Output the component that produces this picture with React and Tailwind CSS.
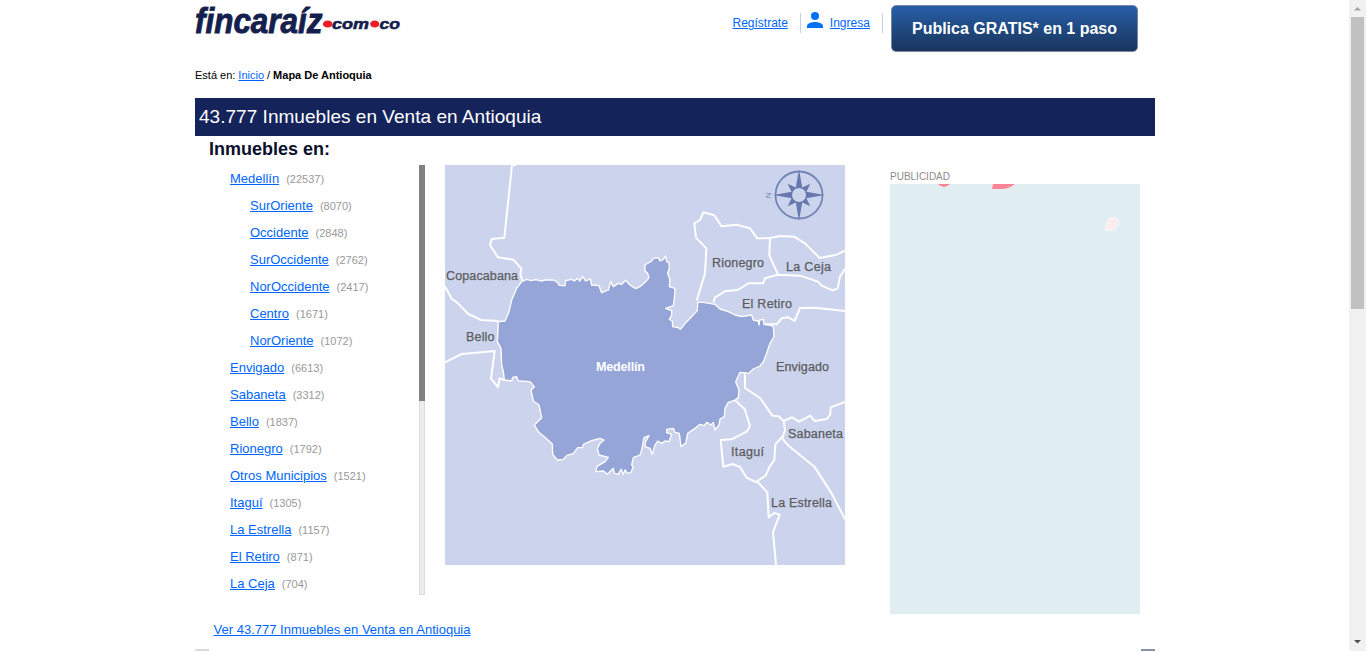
import React from 'react';

const places = [
  ['Medellín', 22537],
  ['SurOriente', 8070, true],
  ['Occidente', 2848, true],
  ['SurOccidente', 2762, true],
  ['NorOccidente', 2417, true],
  ['Centro', 1671, true],
  ['NorOriente', 1072, true],
  ['Envigado', 6613],
  ['Sabaneta', 3312],
  ['Bello', 1837],
  ['Rionegro', 1792],
  ['Otros Municipios', 1521],
  ['Itaguí', 1305],
  ['La Estrella', 1157],
  ['El Retiro', 871],
  ['La Ceja', 704],
];

const medellin =
  '230,350 245,343 258,347 272,344 290,348 300,345 325,345 338,352 343,361 360,362 362,347 380,343 388,348 398,340 404,348 413,335 422,348 436,342 440,360 462,362 470,383 490,375 497,350 505,365 520,355 530,358 542,346 555,360 572,371 585,365 600,352 ' +
  '605,347 612,338 608,325 600,318 600,300 620,288 625,280 640,278 645,288 655,283 662,273 665,290 672,293 673,310 668,325 675,345 673,365 690,370 688,400 685,422 662,430 680,437 680,450 673,463 682,468 683,485 700,488 706,493 725,470 740,455 757,437 758,412 775,412 810,418 825,432 850,440 870,450 890,455 920,450 925,465 940,468 942,480 944,465 955,463 957,478 972,480 985,485 987,515 975,535 965,565 955,590 945,603 ' +
  '925,612 912,625 885,622 872,650 882,675 880,698 868,706 850,712 840,730 838,755 825,762 822,780 810,795 805,772 798,780 785,772 778,782 765,778 750,790 728,805 722,835 708,845 703,805 690,802 685,790 665,793 665,803 680,808 672,830 660,828 650,835 638,828 630,840 622,868 615,850 600,845 602,830 612,812 597,818 590,855 ' +
  '585,870 565,878 560,900 565,905 558,922 548,925 540,915 535,928 528,913 520,928 508,925 505,910 487,928 475,918 453,920 455,905 480,890 490,877 462,870 457,850 465,835 477,825 465,820 440,827 415,838 413,848 398,848 385,865 365,872 355,883 337,885 323,868 322,837 303,820 280,800 268,780 290,758 282,720 265,708 258,675 268,665 255,650 220,648 215,635 203,637 200,648 178,645 175,620 170,600 168,550 157,530 160,470 180,468 192,440 200,405 215,370';

const borders = [
  '213,0 201,0 178,218 140,222 135,240 159,277 205,284 229,311 226,328 233,350',
  '0,364 20,401 40,416 70,447 109,465 160,468',
  '0,592 50,567 149,558 138,640 159,667 164,640 178,645',
  '755,407 780,325 784,250 753,218 748,175 765,165 775,142 808,151 830,184 875,179 915,190 937,220 975,219 1005,213 1048,215 1080,235 1124,279 1175,269 1200,257',
  '975,219 973,272 999,328',
  '805,412 810,397 840,379 878,375 910,355 954,355 960,340 998,329 1065,332 1119,350 1130,362 1164,376 1178,370 1185,335 1200,312',
  '960,478 995,478 1010,460 1030,457 1049,468 1065,429 1110,428 1200,438',
  '900,622 900,669 945,699 982,752 1001,754 1016,768 1041,757 1062,770 1096,752 1109,768 1146,762 1156,747 1157,727 1200,711',
  '1016,768 1020,795 1012,820 1028,840 1108,905 1160,985 1200,1063',
  '1012,815 991,838 988,885 974,905 962,932 932,951 905,938 885,906 862,897 835,905 827,825 860,823 905,800 915,783 899,732 870,706',
  '936,949 967,982 971,1057 988,1044 1004,1049 984,1102 993,1200',
];

const labels = [
  ['Copacabana', 1, 115, 72],
  ['Bello', 21, 176.3, 28.5],
  ['Rionegro', 267, 102, 52],
  ['La Ceja', 341, 106, 45],
  ['El Retiro', 297, 143, 50],
  ['Envigado', 331, 206, 53],
  ['Sabaneta', 343, 273, 55],
  ['Itaguí', 286, 291, 33],
  ['La Estrella', 326, 342, 61],
];

function Link({ children, className = '' }) {
  return <a className={`text-[#0066ff] underline ${className}`}>{children}</a>;
}

function Logo() {
  return (
    <svg className="block h-[40px] w-[210px] overflow-visible" viewBox="0 0 210 40" fill="#151f4d" stroke="#151f4d" fontFamily="'Liberation Sans', Arial, sans-serif" fontStyle="italic" fontWeight="700">
      <text x="0" y="33" fontSize="34.5" strokeWidth=".9" textLength="127.500" lengthAdjust="spacingAndGlyphs">fincaraíz</text>
      <text x="137" y="29" fontSize="15" strokeWidth=".6" textLength="37" lengthAdjust="spacingAndGlyphs">com</text>
      <text x="184.500" y="29" fontSize="15" strokeWidth=".6" textLength="20.500" lengthAdjust="spacingAndGlyphs">co</text>
      <g fill="#ee1c25" stroke="none">
        <ellipse cx="132.700" cy="24" rx="4.800" ry="3.600" />
        <ellipse cx="179.700" cy="24" rx="4.600" ry="3.600" />
      </g>
    </svg>
  );
}

function Compass() {
  return (
    <g transform="translate(354 30)" fill="#6678ad">
      <circle r="23.5" fill="none" stroke="#7384b6" strokeWidth="1.8" />
      {[0, 90, 180, 270].map((a) => (
        <path key={a} transform={`rotate(${a})`} d="M0-25.5 3.5-6H-3.5Z" />
      ))}
      {[45, 135, 225, 315].map((a) => (
        <path key={a} transform={`rotate(${a})`} d="M0-16 3.500-6H-3.500Z" />
      ))}
      <circle r="7" fill="#ccd3ec" />
      <text transform="translate(-28.5 3.2) rotate(-90)" fontSize="8">N</text>
    </g>
  );
}

function Map() {
  return (
    <svg className="block h-[400px] w-[400px] shrink-0 bg-[#ccd3ec]" viewBox="0 0 400 400" fontFamily="'Liberation Sans', Arial, sans-serif">
      <g transform="scale(.333333)" stroke="#fff" strokeLinejoin="round">
        <polygon points={medellin} fill="#96a5d7" strokeWidth="4" />
        {borders.map((p) => (
          <polyline key={p} points={p} fill="none" strokeWidth="6" />
        ))}
      </g>
      <g fill="#5b5c60" stroke="#5b5c60" strokeWidth=".25" fontSize="12.5">
        {labels.map(([name, x, y, w]) => (
          <text key={name} x={x} y={y} textLength={w}>{name}</text>
        ))}
      </g>
      <text x="151" y="206" fontSize="12.5" fontWeight="700" fill="#fff" textLength="49">Medellín</text>
      <Compass />
    </svg>
  );
}

export default function App() {
  return (
    <div className="flex h-[651px] overflow-hidden bg-white font-['Liberation_Sans',Arial,sans-serif] text-[#0a0f2c]">
      <div className="flex grow justify-center pl-px">
        <div className="flex w-[960px] flex-col">
          <header className="flex h-[64px] items-start">
            <Logo />
            <div className="ml-[327.500px] flex w-[158.500px] items-start text-[12px] leading-[20px]">
              <Link className="mt-[13px]">Regístrate</Link>
              <div className="mt-[13px] ml-3 h-5 w-px bg-[#c8d2e6]" />
              <svg className="mt-[12px] ml-1.5 h-4 w-4" viewBox="0 0 16 16" fill="#0070f5">
                <circle cx="8" cy="4" r="4" />
                <path d="M0 16v-2C0 11.300 5 10 8 10s8 1.300 8 4v2Z" />
              </svg>
              <Link className="mt-[13px] ml-[7px]">Ingresa</Link>
              <div className="mt-[13px] ml-3 h-5 w-px bg-[#c8d2e6]" />
            </div>
            <button className="-ml-px mt-[5px] h-[47px] w-[247px] translate-x-px rounded-[5px] border border-[#7a86a5] bg-linear-to-b from-[#265fa8] to-[#19355c] text-[16px] font-bold text-white">
              Publica GRATIS* en 1 paso
            </button>
          </header>
          <nav className="flex h-[34px] items-start gap-[3px] pt-[3px] text-[11px] leading-[16px] text-black">
            <span>Está en:</span>
            <Link>Inicio</Link>
            <span>/</span>
            <b className="text-[11px]">Mapa De Antioquia</b>
          </nav>
          <h1 className="h-[38px] shrink-0 bg-[#15235b] pl-1 text-[19px] leading-[37px] tracking-[0.03px] text-white">43.777 Inmuebles en Venta en Antioquia</h1>
          <h2 className="h-[29px] pl-[14px] text-[18px] leading-[26px] font-bold">Inmuebles en:</h2>
          <main className="flex h-[454px] shrink-0 items-start">
            <ul className="w-[224px] pl-[35px]">
              {places.map(([name, count, nested]) => (
                <li key={name} className={`flex h-[27px] items-center text-[13px] ${nested ? 'pl-5' : ''}`}>
                  <Link>{name}</Link>
                  <span className="ml-[7px] pt-px text-[11px] text-[#999]">({count})</span>
                </li>
              ))}
            </ul>
            <div className="mr-[20px] h-[430px] w-[6px] border border-[#dcdcdc] bg-[#ececec]">
              <div className="-m-px h-[236px] w-[6px] bg-[#808080]" />
            </div>
            <Map />
            <aside className="ml-[45px] w-[250px] pt-[4px]">
              <div className="h-[15px] text-[10px] leading-[15px] text-[#8c8c8c]">PUBLICIDAD</div>
              <svg className="block h-[430px] w-[250px] bg-[#e0edf1]" viewBox="0 0 250 430">
                <path d="M48 0h12q-6 6-12 0ZM103 0h22q-6 5-14 5h-9Z" fill="#ff8495" />
                <path d="M215.500 46.500c0-8 3-13 8-13s7 5 4 9-6 4-12 4Z" fill="#fdecee" stroke="#fff" strokeWidth=".6" />
              </svg>
            </aside>
          </main>
          <div className="h-[30px] pt-px pl-[18.500px] text-[13px] leading-[20px] tracking-[0.01px]">
            <Link>Ver 43.777 Inmuebles en Venta en Antioquia</Link>
          </div>
          <div className="flex h-[2px] justify-between">
            <div className="w-[14px] bg-[#dadada]" />
            <div className="w-[14px] bg-[#8990b0]" />
          </div>
        </div>
      </div>
      <div className="flex w-[17px] flex-col items-center bg-[#f1f1f1]">
        <svg className="h-[17px] w-[17px]" viewBox="0 0 17 17" fill="#a3a3a3"><path d="M5 10.500h7L8.500 7Z" /></svg>
        <div className="h-[292px] w-[13px] bg-[#c1c1c1]" />
        <svg className="mt-auto h-[17px] w-[17px]" viewBox="0 0 17 17" fill="#505050"><path d="M5 6h7L8.500 9.500Z" /></svg>
      </div>
    </div>
  );
}
